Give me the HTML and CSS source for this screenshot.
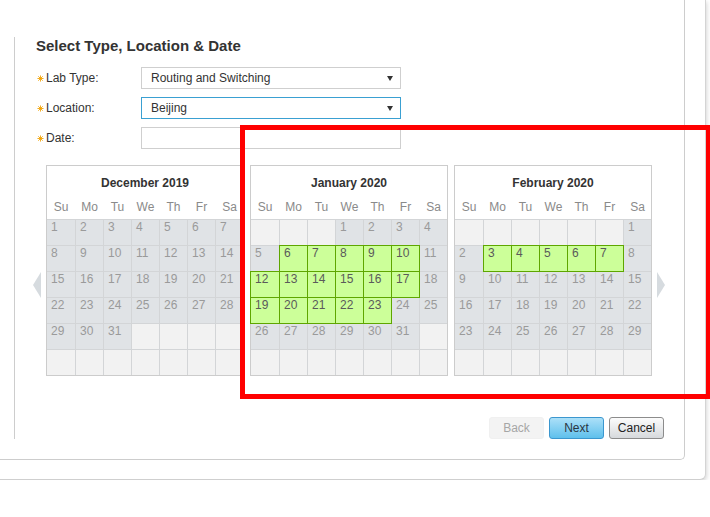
FILE: index.html
```html
<!DOCTYPE html>
<html>
<head>
<meta charset="utf-8">
<link rel="stylesheet" href="styles.css">
</head>
<body>
<div class="card">
  <div class="panel">
    <div class="section">
      <h2 class="title">Select Type, Location &amp; Date</h2>
      <div class="form">
        <div class="row">
          <div class="label"><svg class="req" viewBox="0 0 8 8" width="7" height="7"><path d="M4 0.5V7.5M0.5 4H7.5M1.5 1.5L6.5 6.5M6.5 1.5L1.5 6.5"/></svg>Lab Type:</div>
          <div class="select"><span>Routing and Switching</span><svg class="caret" viewBox="0 0 6 5" width="6" height="5"><polygon points="0,0 6,0 3,5"/></svg></div>
        </div>
        <div class="row">
          <div class="label"><svg class="req" viewBox="0 0 8 8" width="7" height="7"><path d="M4 0.5V7.5M0.5 4H7.5M1.5 1.5L6.5 6.5M6.5 1.5L1.5 6.5"/></svg>Location:</div>
          <div class="select focused"><span>Beijing</span><svg class="caret" viewBox="0 0 6 5" width="6" height="5"><polygon points="0,0 6,0 3,5"/></svg></div>
        </div>
        <div class="row">
          <div class="label"><svg class="req" viewBox="0 0 8 8" width="7" height="7"><path d="M4 0.5V7.5M0.5 4H7.5M1.5 1.5L6.5 6.5M6.5 1.5L1.5 6.5"/></svg>Date:</div>
          <div class="select"></div>
        </div>
      </div>

      <div class="calendars">
        <svg class="arrow" viewBox="0 0 8 26" width="8" height="26"><polygon points="8,0 8,26 0,13"/></svg>

        <div class="month">
          <div class="month-head">
            <div class="month-title">December 2019</div>
            <div class="weekdays"><span>Su</span><span>Mo</span><span>Tu</span><span>We</span><span>Th</span><span>Fr</span><span>Sa</span></div>
          </div>
          <div class="days">
            <div class="d">1</div><div class="d">2</div><div class="d">3</div><div class="d">4</div><div class="d">5</div><div class="d">6</div><div class="d">7</div>
            <div class="d">8</div><div class="d">9</div><div class="d">10</div><div class="d">11</div><div class="d">12</div><div class="d">13</div><div class="d">14</div>
            <div class="d">15</div><div class="d">16</div><div class="d">17</div><div class="d">18</div><div class="d">19</div><div class="d">20</div><div class="d">21</div>
            <div class="d">22</div><div class="d">23</div><div class="d">24</div><div class="d">25</div><div class="d">26</div><div class="d">27</div><div class="d">28</div>
            <div class="d">29</div><div class="d">30</div><div class="d">31</div><div class="e"></div><div class="e"></div><div class="e"></div><div class="e"></div>
            <div class="e"></div><div class="e"></div><div class="e"></div><div class="e"></div><div class="e"></div><div class="e"></div><div class="e"></div>
          </div>
        </div>

        <div class="month">
          <div class="month-head">
            <div class="month-title">January 2020</div>
            <div class="weekdays"><span>Su</span><span>Mo</span><span>Tu</span><span>We</span><span>Th</span><span>Fr</span><span>Sa</span></div>
          </div>
          <div class="days">
            <div class="e"></div><div class="e"></div><div class="e"></div><div class="d">1</div><div class="d">2</div><div class="d">3</div><div class="d">4</div>
            <div class="d">5</div><div class="d on">6</div><div class="d on">7</div><div class="d on">8</div><div class="d on">9</div><div class="d on">10</div><div class="d">11</div>
            <div class="d on">12</div><div class="d on">13</div><div class="d on">14</div><div class="d on">15</div><div class="d on">16</div><div class="d on">17</div><div class="d">18</div>
            <div class="d on">19</div><div class="d on">20</div><div class="d on">21</div><div class="d on">22</div><div class="d on">23</div><div class="d">24</div><div class="d">25</div>
            <div class="d">26</div><div class="d">27</div><div class="d">28</div><div class="d">29</div><div class="d">30</div><div class="d">31</div><div class="e"></div>
            <div class="e"></div><div class="e"></div><div class="e"></div><div class="e"></div><div class="e"></div><div class="e"></div><div class="e"></div>
          </div>
        </div>

        <div class="month">
          <div class="month-head">
            <div class="month-title">February 2020</div>
            <div class="weekdays"><span>Su</span><span>Mo</span><span>Tu</span><span>We</span><span>Th</span><span>Fr</span><span>Sa</span></div>
          </div>
          <div class="days">
            <div class="e"></div><div class="e"></div><div class="e"></div><div class="e"></div><div class="e"></div><div class="e"></div><div class="d">1</div>
            <div class="d">2</div><div class="d on">3</div><div class="d on">4</div><div class="d on">5</div><div class="d on">6</div><div class="d on">7</div><div class="d">8</div>
            <div class="d">9</div><div class="d">10</div><div class="d">11</div><div class="d">12</div><div class="d">13</div><div class="d">14</div><div class="d">15</div>
            <div class="d">16</div><div class="d">17</div><div class="d">18</div><div class="d">19</div><div class="d">20</div><div class="d">21</div><div class="d">22</div>
            <div class="d">23</div><div class="d">24</div><div class="d">25</div><div class="d">26</div><div class="d">27</div><div class="d">28</div><div class="d">29</div>
            <div class="e"></div><div class="e"></div><div class="e"></div><div class="e"></div><div class="e"></div><div class="e"></div><div class="e"></div>
          </div>
        </div>

        <svg class="arrow arrow-right" viewBox="0 0 8 26" width="8" height="26"><polygon points="0,0 0,26 8,13"/></svg>
      </div>

      <div class="actions">
        <button class="btn btn-back">Back</button>
        <button class="btn btn-next">Next</button>
        <button class="btn btn-cancel">Cancel</button>
      </div>
    </div>
  </div>
</div>
<div class="highlight"></div>
</body>
</html>
```

FILE: styles.css
```css
html, body {
  margin: 0;
  padding: 0;
  overflow: hidden;
  background: #fff;
  font-family: "Liberation Sans", Arial, sans-serif;
  color: #333;
}

.card {
  width: 726px;
  margin-left: -20px;
  box-sizing: border-box;
  padding: 0 20px 19px 0;
  background: #fff;
  border-right: 1px solid #d4d4d4;
  border-bottom: 1px solid #cfcfcf;
  border-bottom-right-radius: 6px;
  box-shadow: 1px 2px 4px rgba(0, 0, 0, 0.16);
}

.panel {
  width: 695px;
  margin-left: 10px;
  box-sizing: border-box;
  padding: 37px 20px 20px 24px;
  border-right: 1px solid #cdcdcd;
  border-bottom: 1px solid #cdcdcd;
  border-bottom-right-radius: 5px;
}

.section {
  border-left: 1px solid #cdcdcd;
  padding-left: 21px;
}

.title {
  margin: 0 0 13px;
  font-size: 15px;
  line-height: 17px;
  font-weight: bold;
  color: #333;
}

.form {
  display: flex;
  flex-direction: column;
  gap: 8px;
}

.row {
  display: flex;
  align-items: center;
  height: 22px;
}

.label {
  width: 105px;
  display: flex;
  align-items: center;
  font-size: 12px;
  color: #333;
}

.req {
  margin: 0 2px 0 1px;
  fill: none;
  stroke: #f0a000;
  stroke-width: 1;
}

.select {
  width: 260px;
  height: 22px;
  box-sizing: border-box;
  border: 1px solid #cfcfcf;
  display: flex;
  align-items: center;
  justify-content: space-between;
  padding: 0 7px 0 9px;
  font-size: 12px;
  color: #333;
}

.select.focused {
  border-color: #3aa0d2;
}

.caret {
  fill: #333;
}

.calendars {
  display: flex;
  align-items: flex-start;
  gap: 6px;
  margin: 16px 0 0 -3px;
}

.arrow {
  margin-top: 107px;
  margin-right: -1px;
  fill: #d6dbdf;
  flex: none;
}

.arrow-right {
  margin-right: 0;
  margin-left: -1px;
}

.month {
  width: 198px;
  box-sizing: border-box;
  border: 1px solid #cccccc;
  background: #fff;
  flex: none;
}

.month-head {
  padding: 10px 0 5px;
}

.month-title {
  text-align: center;
  font-size: 12px;
  line-height: 14px;
  font-weight: bold;
  color: #333;
}

.weekdays {
  margin-top: 10px;
  display: grid;
  grid-template-columns: 28px repeat(6, 27px);
  column-gap: 1px;
  font-size: 12px;
  line-height: 14px;
  color: #8a8a8a;
  text-align: center;
}

.days {
  display: grid;
  grid-template-columns: 28px repeat(6, 27px);
  grid-auto-rows: 25px;
  gap: 1px;
  background: #d3d5d7;
  border-top: 1px solid #d3d5d7;
}

.d, .e {
  box-sizing: border-box;
  padding: 0 0 0 4px;
  font-size: 12px;
  line-height: 14px;
}

.d {
  background: #e0e3e6;
  color: #9a9a9a;
}

.e {
  background: #f2f2f2;
}

.d.on {
  background: #ccff99;
  color: #5a5a5a;
  outline: 1px solid #5ea600;
}

.actions {
  display: flex;
  justify-content: flex-end;
  gap: 5px;
  margin-top: 41px;
}

.btn {
  width: 55px;
  height: 22px;
  box-sizing: border-box;
  padding: 0;
  font-family: "Liberation Sans", Arial, sans-serif;
  font-size: 12px;
  border-radius: 3px;
  border: 1px solid transparent;
}

.btn-back {
  background: #f3f3f3;
  border-color: #f0f0f0;
  color: #a6a6a6;
}

.btn-next {
  background: linear-gradient(#ace0f8, #5fc0ec);
  border-color: #3b97cf;
  color: #2a3542;
}

.btn-cancel {
  background: linear-gradient(#fcfcfc, #d6d9dc);
  border-color: #8c8c8c;
  color: #222;
}

.highlight {
  position: absolute;
  left: 240px;
  top: 125px;
  width: 471px;
  height: 274px;
  box-sizing: border-box;
  border: 5px solid #ff0000;
}
```
